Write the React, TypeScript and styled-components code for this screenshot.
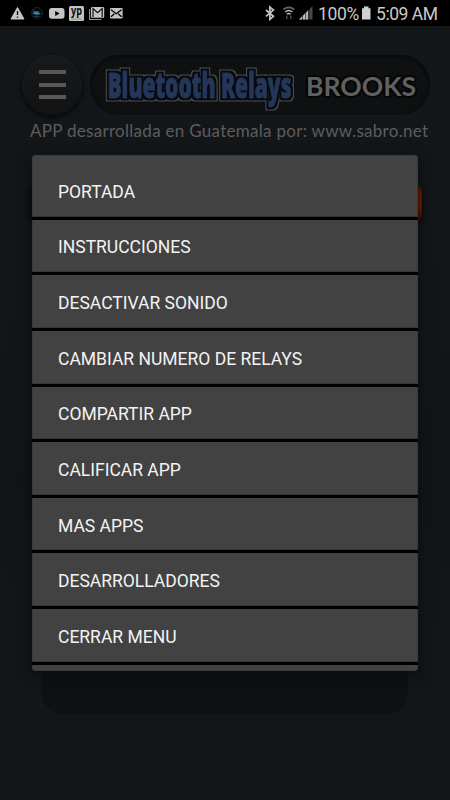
import React from "react";
import styled, { createGlobalStyle } from "styled-components";

const GlobalStyle = createGlobalStyle`
  * { box-sizing: border-box; }
  html, body { margin: 0; background: #121618; overflow: hidden; }
`;

const Screen = styled.div`
  position: relative;
  width: 450px;
  height: 800px;
  overflow: hidden;
  display: flex;
  flex-direction: column;
  background: linear-gradient(#14171a, #111517 60%, #13171a);
  font-family: Roboto, "Liberation Sans", sans-serif;
`;

const StatusBar = styled.header`
  display: flex;
  justify-content: space-between;
  height: 26px;
  flex: none;
  background: #000;
`;

const StatusSide = styled.div`
  display: flex;
`;

const StatusText = styled.span<{ $width: number; $spacing: number }>`
  width: ${(p) => p.$width}px;
  letter-spacing: ${(p) => p.$spacing}px;
  font-size: 17.5px;
  line-height: 28px;
  color: #c9c9c9;
  white-space: nowrap;
`;

const TitleRow = styled.div`
  display: flex;
  gap: 8px;
  padding: 29px 20px 0 22px;
`;

const MenuButton = styled.button`
  display: flex;
  flex-direction: column;
  align-items: center;
  gap: 8.5px;
  width: 60px;
  height: 60px;
  padding: 15px 0 0;
  border: 0;
  border-radius: 50%;
  background: linear-gradient(#17191b, #101214);
  box-shadow: 0 2px 4px 1px #07090a, inset 0 1px 1px #1d2022;
`;

const MenuBar = styled.span`
  width: 27px;
  height: 4px;
  background: #585858;
`;

const TitlePill = styled.div`
  width: 340px;
  height: 60px;
  border-radius: 30px;
  background: #0e1012;
  box-shadow: inset 0 1px 3px 1px #08090a, 0 1px 1px #15191b;
`;

const Caption = styled.p`
  margin: 5px 0 0 30px;
  font-family: Lato, sans-serif;
  font-size: 17px;
  line-height: 22px;
  letter-spacing: 0.29px;
  color: #5c5d5e;
  white-space: nowrap;
`;

const RelayBar = styled.div`
  flex: none;
  width: 393px;
  height: 38px;
  margin: 42px 0 0 29px;
  border-radius: 8px;
  background:
    linear-gradient(90deg, #0c0e0f 50%, transparent 50%),
    linear-gradient(#5e1204, #7a1a04 50%, #3c0d05);
  box-shadow: 0 2px 4px #07090a;
`;

const BackPanel = styled.div`
  flex: none;
  width: 366px;
  height: 478px;
  margin: 14px 0 0 42px;
  border-radius: 20px;
  background: linear-gradient(#0d0f11 90%, #101113);
`;

const Dialog = styled.nav`
  position: absolute;
  left: 32px;
  top: 155px;
  width: 386px;
  height: 516px;
  padding-top: 8px;
  border: 1px solid #393939;
  border-radius: 3px;
  background: #424242;
  box-shadow: 0 4px 14px 1px #080a0b99;
`;

const MenuItem = styled.a`
  display: flex;
  align-items: center;
  height: 55.65px;
  margin: 0 -1px;
  padding: 3px 0 0 26px;
  border-bottom: 3px solid #000;
  box-shadow: inset 0 -1px #363636;
  color: #f3f3f3;
  font-size: 17.5px;
  white-space: nowrap;
`;

const items = [
  "PORTADA",
  "INSTRUCCIONES",
  "DESACTIVAR SONIDO",
  "CAMBIAR NUMERO DE RELAYS",
  "COMPARTIR APP",
  "CALIFICAR APP",
  "MAS APPS",
  "DESARROLLADORES",
  "CERRAR MENU",
];

const NotificationIcons = () => (
  <svg width="130" height="26" viewBox="0 0 130 26">
    <path d="M17.5 7.5 24 19H11z" fill="#c4c4c4" stroke="#c4c4c4" strokeLinejoin="round" />
    <path d="M17.5 11v4M17.5 16.4v1.4" stroke="#000" strokeWidth="1.3" />
    <circle cx="37" cy="13" r="5.4" fill="#020609" stroke="#24282a" />
    <path d="M32.8 10.5l2.5 1.5h4M32.5 13.2q4-3 8 .5q-4 2.2-8-.5zM33.5 16.3h6" fill="#3d98b0" stroke="#22607a" strokeWidth=".8" />
    <rect x="49" y="8" width="15.5" height="10.8" rx="2.7" fill="#c4c4c4" />
    <path d="m55.2 10.9 4.5 2.5-4.5 2.5z" fill="#000" />
    <rect x="69" y="6" width="15" height="15" rx="1.5" fill="#c4c4c4" />
    <text x="71" y="15.2" fontFamily="Open Sans, sans-serif" fontSize="11.5" fontWeight="700" textLength="11" lengthAdjust="spacingAndGlyphs" fill="#080808">yp</text>
    <path d="M71 19h11" stroke="#777" strokeWidth=".7" />
    <path d="M89.6 9v10.5h11.8" fill="none" stroke="#999" strokeWidth="1.1" />
    <rect x="91" y="7" width="13.2" height="10.7" rx="1" fill="#c4c4c4" />
    <path d="M93 17V8.5l4.6 4.2 4.6-4.2V17" fill="none" stroke="#111" strokeWidth="1.2" />
    <rect x="110" y="8" width="12.6" height="10.5" rx="1" fill="#c4c4c4" />
    <path d="m111 9.7 5.3 4 5.3-4M111 16.8l3.4-3M121.6 16.8l-3.4-3" fill="none" stroke="#000" strokeWidth="1.4" />
  </svg>
);

const SignalIcons = () => (
  <svg width="56" height="26" viewBox="262 0 56 26">
    <path d="m266 10 7.4 6.3-3.5 3V7.1l3.5 3-7.4 6.3" fill="none" stroke="#c2c2c2" strokeWidth="1.7" />
    <path d="M283.4 9.5q5.4-4.2 10.8 0" fill="none" stroke="#666" strokeWidth="1.6" />
    <path d="M285.2 12q3.6-2.8 7.2 0M287 14.2q1.8-1.3 3.6 0" fill="none" stroke="#c0c0c0" strokeWidth="1.5" />
    <path d="M286.8 15.5v3.5M290.8 15.5v3.5" stroke="#444" strokeWidth="1.6" />
    <path d="M299 19.5 312.5 6v13.5z" fill="#484848" />
    <path d="m299 19.5 9-9v9z" fill="#b9b9b9" />
    <path d="M302.5 14v6M305.7 11v9M309 8v12" stroke="#000" strokeWidth=".6" />
  </svg>
);

const BatteryIcon = () => (
  <svg width="18" height="26" viewBox="0 0 18 26">
    <path d="M4 8.3h2v-1.8h4.5v1.8h2v11.2H4z" fill="#cfcfcf" />
  </svg>
);

const BrandLogo = () => (
  <svg width="340" height="60" viewBox="0 0 340 60">
    <filter id="outline" x="-5%" y="-20%" width="110%" height="140%" colorInterpolationFilters="sRGB">
      <feMorphology in="SourceAlpha" operator="dilate" radius="2" result="inner" />
      <feMorphology in="SourceAlpha" operator="dilate" radius="3" result="outer" />
      <feFlood floodColor="#07090d" />
      <feComposite in2="inner" operator="in" result="dark" />
      <feFlood floodColor="#505050" />
      <feComposite in2="outer" operator="in" result="rim" />
      <feMerge>
        <feMergeNode in="rim" />
        <feMergeNode in="dark" />
        <feMergeNode in="SourceGraphic" />
      </feMerge>
    </filter>
    <text x="17.5" y="42.5" fontFamily="Open Sans, sans-serif" fontWeight="800" fontSize="35" textLength="184" lengthAdjust="spacingAndGlyphs" fill="#24375a" stroke="#24375a" strokeWidth="1" strokeLinejoin="round" filter="url(#outline)">Bluetooth Relays</text>
    <text x="216" y="41" fontFamily="Lato, sans-serif" fontWeight="700" fontSize="27" textLength="110" lengthAdjust="spacingAndGlyphs" fill="#606060" stroke="#050606" strokeWidth="4" strokeLinejoin="round" paintOrder="stroke">BROOKS</text>
  </svg>
);

export default function App() {
  return (
    <Screen>
      <GlobalStyle />
      <StatusBar>
        <StatusSide><NotificationIcons /></StatusSide>
        <StatusSide>
          <SignalIcons />
          <StatusText $width={40} $spacing={-0.3}>100%</StatusText>
          <BatteryIcon />
          <StatusText $width={74} $spacing={-0.45}>5:09 AM</StatusText>
        </StatusSide>
      </StatusBar>
      <TitleRow>
        <MenuButton aria-label="Menu"><MenuBar /><MenuBar /><MenuBar /></MenuButton>
        <TitlePill><BrandLogo /></TitlePill>
      </TitleRow>
      <Caption>APP desarrollada en Guatemala por: www.sabro.net</Caption>
      <RelayBar />
      <BackPanel />
      <Dialog>
        {items.map((label) => <MenuItem key={label}>{label}</MenuItem>)}
      </Dialog>
    </Screen>
  );
}
